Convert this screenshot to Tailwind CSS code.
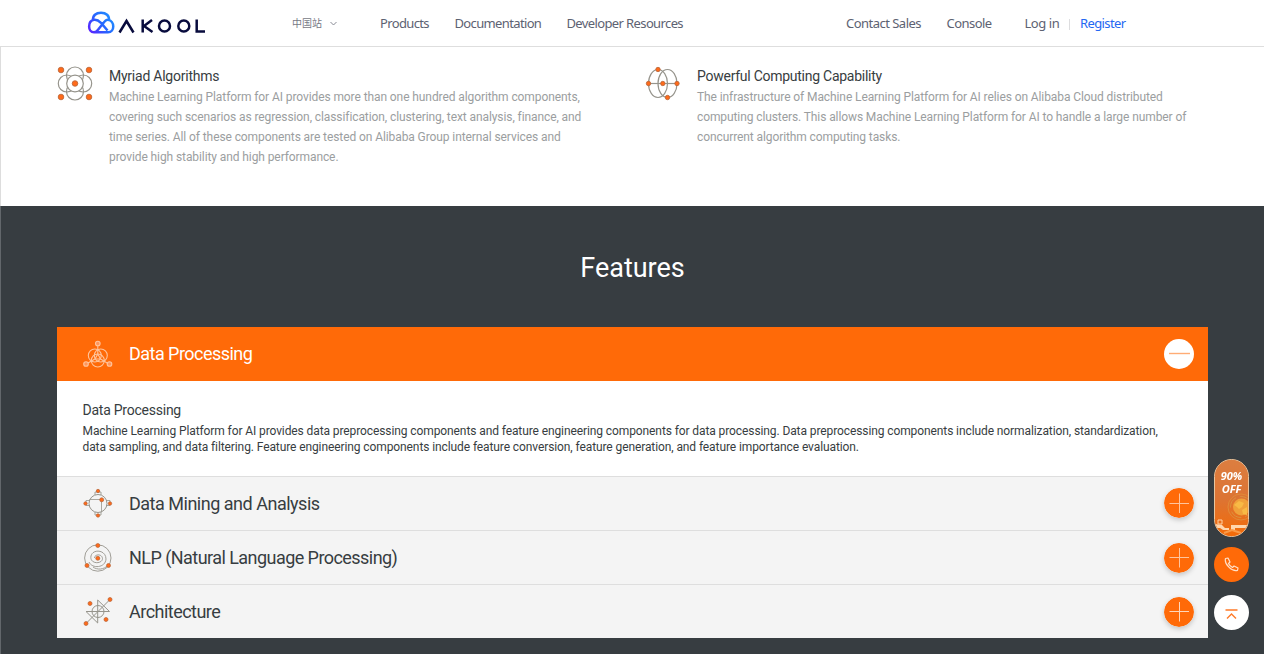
<!DOCTYPE html>
<html lang="en">
<head>
<meta charset="utf-8">
<title>Machine Learning Platform for AI</title>
<script src="https://cdn.jsdelivr.net/npm/@tailwindcss/browser@4"></script>
</head>
<body class="h-[654px] w-[1264px] overflow-hidden bg-white font-['Roboto',sans-serif] text-[#373d41]">
<header class="flex h-[47px] items-center border-b border-[#dedede] pl-[87px] font-['Noto_Sans','Noto_Sans_CJK_SC',sans-serif] text-[13px] whitespace-nowrap text-[#5d6272]">
  <a class="block w-[119px] shrink-0">
    <svg class="block" width="119" height="24" viewBox="0 0 119 24" fill="none">
      <defs><linearGradient id="lg" x1="0" y1="22" x2="26" y2="2" gradientUnits="userSpaceOnUse"><stop stop-color="#6514ff"/><stop offset=".5" stop-color="#2864ff"/><stop offset="1" stop-color="#1e98ff"/></linearGradient></defs>
      <path d="M6 9.500C5.500 4.500 9 1.800 14 1.800C19 1.800 22.500 4.500 22 9.500M14 11.800C11 8.800 9 8.500 7 8.800C.5 10 .5 21.300 7 21.300C9.500 21.300 10.500 19.500 12 17.500L16 12.500C18 9.800 19 8.500 21 8.800C28 10 28 21.300 21 21.300H8M14 11.800L20.500 19.500" stroke="url(#lg)" stroke-width="2.500" stroke-linejoin="round"/>
      <path d="M32.500 21.500L39.500 10L46.500 21.500M55.700 8.500V21.500M65 9L57 15L65.500 21M109.700 8.500V20.400H118" stroke="#080b3d" stroke-width="2.500"/>
      <circle cx="77.500" cy="15" r="5.500" stroke="#080b3d" stroke-width="2.500"/><circle cx="96.800" cy="15" r="5.500" stroke="#080b3d" stroke-width="2.500"/>
    </svg>
  </a>
  <div class="ml-[86px] flex w-[88px] shrink-0 items-center gap-[8px] text-[10px] text-[#777985]"><span>中国站</span>
    <svg width="7" height="5" viewBox="0 0 7 5" fill="none" stroke="#888a94"><path d="M.5 1L3.500 4L6.500 1"/></svg></div>
  <nav class="flex w-[466px] shrink-0 pt-[2px]">
    <a class="w-[74.500px] tracking-[-0.64px]">Products</a><a class="w-[112px] tracking-[-0.64px]">Documentation</a><a class="tracking-[-0.62px]">Developer Resources</a>
  </nav>
  <nav class="flex items-center pt-[2px]">
    <a class="w-[100.500px] tracking-[-0.52px]">Contact Sales</a><a class="w-[78px] tracking-[-0.54px]">Console</a><a class="w-[44.500px] tracking-[-0.45px]">Log in</a><i class="h-[11px] w-[11px] border-l border-[#dddddf]"></i><a class="tracking-[-0.6px] text-[#2468f2]">Register</a>
  </nav>
</header>

<section class="flex h-[159px] border-l border-[#ddd] pt-[18px] pl-[56px]">
  <article class="flex w-[588px]">
    <svg class="mt-px shrink-0" width="36" height="36" viewBox="0 0 36 36" fill="none" stroke="#96948c" stroke-width="1.200">
      <circle cx="18" cy="9.500" r="8.500"/><circle cx="18" cy="25.500" r="8.500"/><circle cx="9.800" cy="17.500" r="8.500"/><circle cx="26.200" cy="17.500" r="8.500"/><circle cx="18" cy="17.500" r="8.300" fill="white"/>
      <g fill="#ff6a1a" stroke="#b5643a" stroke-width=".8"><circle cx="4" cy="4" r="2.800"/><circle cx="32" cy="4" r="2.800"/><circle cx="4" cy="31" r="2.800"/><circle cx="32" cy="31" r="2.800"/><circle cx="18" cy="17.500" r="2.800"/></g>
    </svg>
    <div class="ml-[16px] whitespace-nowrap">
      <h3 class="h-[22px] text-[14px] leading-[22px] tracking-[-0.24px]">Myriad Algorithms</h3>
      <p class="text-[12px] leading-5 tracking-[-0.09px] text-[#9b9ea0]">Machine Learning Platform for AI provides more than one hundred algorithm components,<br>covering such scenarios as regression, classification, clustering, text analysis, finance, and<br>time series. All of these components are tested on Alibaba Group internal services and<br>provide high stability and high performance.</p>
    </div>
  </article>
  <article class="flex">
    <svg class="mt-px shrink-0" width="36" height="36" viewBox="0 0 36 36" fill="none" stroke="#96948c" stroke-width="1.200">
      <ellipse cx="13" cy="17.500" rx="9.500" ry="14"/><ellipse cx="22.500" cy="17.500" rx="9.500" ry="14"/><path d="M3 17.500H32"/>
      <g fill="#ff6a1a" stroke="#b5643a" stroke-width=".8"><circle cx="13" cy="3.500" r="2.200"/><circle cx="3.500" cy="17.500" r="2.200"/><circle cx="17.800" cy="17.500" r="2.200"/><circle cx="32" cy="17.500" r="2.200"/><circle cx="22.500" cy="31.500" r="2.200"/></g>
    </svg>
    <div class="ml-[16px] whitespace-nowrap">
      <h3 class="h-[22px] text-[14px] leading-[22px] tracking-[-0.26px]">Powerful Computing Capability</h3>
      <p class="text-[12px] leading-5 tracking-[-0.095px] text-[#9b9ea0]">The infrastructure of Machine Learning Platform for AI relies on Alibaba Cloud distributed<br>computing clusters. This allows Machine Learning Platform for AI to handle a large number of<br>concurrent algorithm computing tasks.</p>
    </div>
  </article>
</section>

<section class="h-[448px] border-l border-[#62676b] bg-[#373d41] pl-[56px]">
  <h2 class="h-[121px] w-[1151px] pt-[43px] text-center text-[27px] leading-[38px] text-white">Features</h2>
  <div class="w-[1151px] bg-[#f4f4f4]">
    <div class="flex h-[54px] items-center bg-[#ff6a08] pr-[14px] pl-[25px] text-white">
      <svg class="mt-[3px]" width="32" height="32" viewBox="0 0 32 32" fill="none" stroke="#ffc49c" stroke-width="1.100">
        <circle cx="12.800" cy="15.500" r="6.500"/><circle cx="18.800" cy="15.500" r="6.500"/><circle cx="15.800" cy="20.500" r="6.500"/><path d="M15.800 6V14L13 19H18.500L15.800 14M13 19L5 23.500M18.500 19L26 23.500"/>
        <g fill="#ff955c"><circle cx="15.800" cy="3.500" r="2.300"/><circle cx="4" cy="24" r="2.300"/><circle cx="27.500" cy="24" r="2.300"/></g>
      </svg>
      <h3 class="ml-[15px] flex-1 pb-px text-[18px] tracking-[-0.53px]">Data Processing</h3>
      <svg width="30" height="30" viewBox="0 0 30 30"><circle cx="15" cy="15" r="15" fill="white"/><path d="M5 14.500H26" stroke="#ffac75" stroke-width="1.400"/></svg>
    </div>
    <div class="h-[95px] bg-white pt-[18px] pl-[25.500px] whitespace-nowrap">
      <h4 class="h-[24px] text-[14px] leading-[22px] tracking-[-0.24px]">Data Processing</h4>
      <p class="text-[12px] leading-4 tracking-[-0.098px]">Machine Learning Platform for AI provides data preprocessing components and feature engineering components for data processing. Data preprocessing components include normalization, standardization,<br>data sampling, and data filtering. Feature engineering components include feature conversion, feature generation, and feature importance evaluation.</p>
    </div>
    <div class="flex h-[54px] items-center border-t border-[#dedede] pr-[14px] pb-px pl-[25px]">
      <svg width="32" height="32" viewBox="0 0 32 32" fill="none" stroke="#96948c">
        <circle cx="16" cy="16.500" r="9"/><path d="M7.500 12.500H19.500V25M13 8V5H19V8M13 25V28H19V25M8 13.500H4V18.500H8M24 13.500H28V18.500H24" stroke-width=".8"/>
        <g fill="#ff6a1a" stroke="#b5643a" stroke-width=".7"><circle cx="16" cy="4" r="1.700"/><circle cx="16" cy="28.500" r="1.700"/><circle cx="3.500" cy="16.500" r="1.700"/><circle cx="28" cy="16.500" r="1.700"/><circle cx="19.700" cy="12.800" r="2"/></g>
      </svg>
      <h3 class="ml-[15px] flex-1 text-[18px] tracking-[-0.49px]">Data Mining and Analysis</h3>
      <svg class="rounded-full shadow-[0_2px_5px_rgba(0,0,0,0.2)]" width="30" height="30" viewBox="0 0 30 30"><circle cx="15" cy="15" r="15" fill="#ff6a08"/><path d="M5.500 15.500H25M15.500 5.500V25" stroke="#ffc49c"/></svg>
    </div>
    <div class="flex h-[54px] items-center border-t border-[#dedede] pr-[14px] pl-[25px]">
      <svg width="32" height="32" viewBox="0 0 32 32" fill="none" stroke="#96948c" stroke-width=".9">
        <circle cx="15.800" cy="16" r="13.200"/><path d="M12.500 16C12.500 12 20 11.500 20.500 16.500C20.500 22 9 22.500 8.800 15.500C9 6.500 24 7 24 17C23.500 26 10 27 7 20M26 23C22 28 15 28 11 25"/>
        <g fill="#ff6a1a" stroke="#b5643a" stroke-width=".7"><circle cx="15.800" cy="3.500" r="2"/><circle cx="15.800" cy="16.300" r="2"/><circle cx="5" cy="23.500" r="2"/><circle cx="26.500" cy="23.500" r="2"/></g>
      </svg>
      <h3 class="ml-[15px] flex-1 text-[18px] tracking-[-0.55px]">NLP (Natural Language Processing)</h3>
      <svg class="rounded-full shadow-[0_2px_5px_rgba(0,0,0,0.2)]" width="30" height="30" viewBox="0 0 30 30"><circle cx="15" cy="15" r="15" fill="#ff6a08"/><path d="M5.500 14.500H25M15.500 5V24.500" stroke="#ffc49c"/></svg>
    </div>
    <div class="flex h-[54px] items-center border-t border-[#dedede] pr-[14px] pl-[25px]">
      <svg width="32" height="32" viewBox="0 0 32 32" fill="none" stroke="#96948c">
        <circle cx="16" cy="15.500" r="6"/><path d="M4 27.500L28 3.500M15.700 27V4L27.500 15.500H4Z"/>
        <g fill="#ff6a1a" stroke="#b5643a" stroke-width=".7"><circle cx="28" cy="3.500" r="2"/><circle cx="4" cy="27.500" r="2"/><circle cx="8" cy="7.500" r="2"/><circle cx="24" cy="23.500" r="2"/></g>
      </svg>
      <h3 class="ml-[15px] flex-1 text-[18px] tracking-[-0.52px]">Architecture</h3>
      <svg class="rounded-full shadow-[0_2px_5px_rgba(0,0,0,0.2)]" width="30" height="30" viewBox="0 0 30 30"><circle cx="15" cy="15" r="15" fill="#ff6a08"/><path d="M5.500 14.500H25M15.500 5V24.500" stroke="#ffd7bb"/></svg>
    </div>
  </div>
</section>

<aside class="fixed top-[459px] left-[1214px] flex w-[35px] flex-col items-center">
  <a class="relative h-[78px] w-[35px] overflow-hidden rounded-full border border-[#e8c49d] bg-[#dc7939]">
    <svg class="absolute inset-0" width="33" height="76" viewBox="0 0 33 76" fill="none">
      <defs><linearGradient id="promo" x1="0" y1="0" x2="0" y2="1"><stop stop-color="#dc7e40"/><stop offset=".5" stop-color="#dc7434"/><stop offset="1" stop-color="#f36b08"/></linearGradient></defs>
      <path fill="url(#promo)" d="M0 0H33V76H0z"/><circle cx="26" cy="47" r="13" stroke="#e08a38"/><circle cx="26" cy="47" r="10.500" stroke="#d9923f" stroke-dasharray="12 4"/><circle cx="26.500" cy="47" r="8.500" fill="#f0a13a"/><path d="M19 45L24 41L29 43L27 47L24 49L22 47ZM27 50L32 47V55L28 54Z" fill="#f8ba45"/><path d="M0 64L7 65L10 68H14V70H8L5 68H0ZM16 65H33V68H20V70H16Z" fill="#ffd6ad"/><path d="M3 60H7V64H3Z" stroke="#ffd1a5"/><path d="M9 73L17 70L26 73" stroke="#f99b48" stroke-width="2"/>
    </svg>
    <span class="relative block pt-[9px] text-center font-['Open_Sans',sans-serif] text-[11px] leading-[13px] font-bold text-white italic">90%<br>OFF</span>
  </a>
  <a class="mt-[10px] flex h-[35px] w-[35px] items-center justify-center rounded-full bg-[#ff6a08]">
    <svg width="15" height="15" viewBox="0 0 15 15" fill="none" stroke="#ffe0c9" stroke-width="1.200" stroke-linejoin="round"><path d="M1.500 1.500L4 1L6 5L4.500 6.500C5.300 8.200 6.800 9.700 8.500 10.500L10 9L14 11L13.500 13.500C8 15 0 7 1.500 1.500Z"/></svg>
  </a>
  <a class="mt-[13px] flex h-[35px] w-[35px] items-center justify-center rounded-full bg-white">
    <svg class="mt-[3px]" width="13" height="12" viewBox="0 0 13 12" fill="none" stroke="#ff7a28" stroke-width="1.400"><path d="M.5 2H12.500M2 10.500L6.500 6L11 10.500"/></svg>
  </a>
</aside>
</body>
</html>
